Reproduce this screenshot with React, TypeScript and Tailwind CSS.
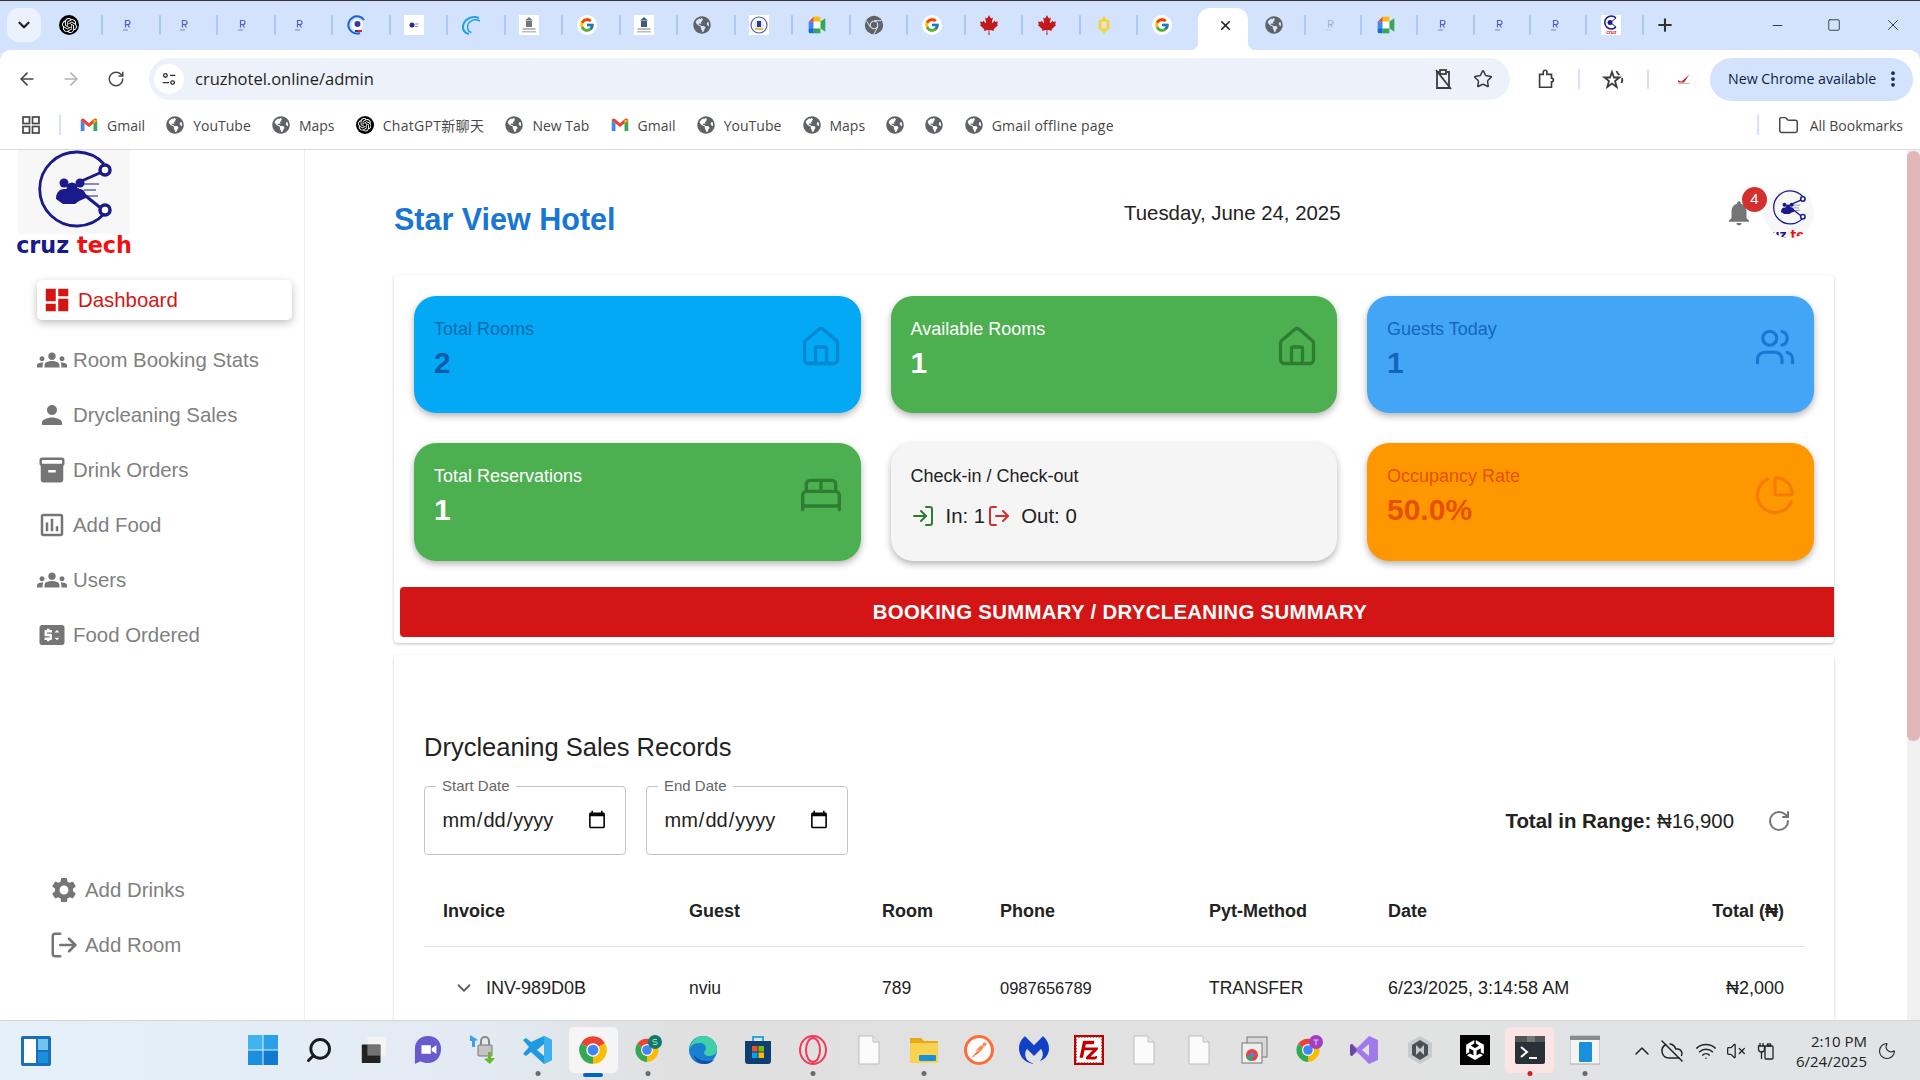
import React from "react";
import { ArrowLeft, ArrowRight, RotateCw, Star, X, Minus, Plus, Square, ChevronDown, House, Users, BedDouble, PieChart, LogIn, LogOut, Folder, EllipsisVertical, Search, Moon, ChevronUp, Wifi, VolumeX, CloudOff } from "lucide-react";
import { FaGlobeAmericas, FaCanadianMapleLeaf } from "react-icons/fa";
import { FcGoogle } from "react-icons/fc";
import { SiFilezilla, SiPostman, SiMalwarebytes, SiUnity, SiOpenai } from "react-icons/si";

const Mui = ({ d, className }: { d: string; className: string }) => (
  <svg viewBox="0 0 24 24" fill="currentColor" className={className}><path d={d} /></svg>
);

const P = {
  dash: "M3 13h8V3H3v10zm0 8h8v-6H3v6zm10 0h8V11h-8v10zm0-18v6h8V3h-8z",
  groups: "M12 12.75c1.63 0 3.07.39 4.24.9 1.08.48 1.76 1.56 1.76 2.73V18H6v-1.61c0-1.18.68-2.26 1.76-2.73 1.17-.52 2.61-.91 4.24-.91zM4 13c1.1 0 2-.9 2-2s-.9-2-2-2-2 .9-2 2 .9 2 2 2zm1.13 1.1c-.37-.06-.74-.1-1.13-.1-.99 0-1.93.21-2.78.58C.48 14.9 0 15.62 0 16.43V18h4.5v-1.61c0-.83.23-1.61.63-2.29zM20 13c1.1 0 2-.9 2-2s-.9-2-2-2-2 .9-2 2 .9 2 2 2zm4 3.43c0-.81-.48-1.53-1.22-1.85-.85-.37-1.79-.58-2.78-.58-.39 0-.76.04-1.13.1.4.68.63 1.46.63 2.29V18H24v-1.57zM12 6c1.66 0 3 1.34 3 3s-1.34 3-3 3-3-1.34-3-3 1.34-3 3-3z",
  person: "M12 12c2.21 0 4-1.79 4-4s-1.79-4-4-4-4 1.79-4 4 1.79 4 4 4zm0 2c-2.67 0-8 1.34-8 4v2h16v-2c0-2.66-5.33-4-8-4z",
  box: "M20 2H4c-1 0-2 .9-2 2v3.01c0 .72.43 1.34 1 1.69V20c0 1.1 1.1 2 2 2h14c.9 0 2-.9 2-2V8.7c.57-.35 1-.97 1-1.69V4c0-1.1-1-2-2-2zm-5 12H9v-2h6v2zm5-7H4V4h16v3z",
  chart: "M19 3H5c-1.1 0-2 .9-2 2v14c0 1.1.9 2 2 2h14c1.1 0 2-.9 2-2V5c0-1.1-.9-2-2-2zm0 16H5V5h14v14zM7 10h2v7H7zm4-3h2v10h-2zm4 6h2v4h-2z",
  price: "M20 4H4c-1.11 0-1.99.89-1.99 2L2 18c0 1.11.89 2 2 2h16c1.11 0 2-.89 2-2V6c0-1.11-.89-2-2-2zm-8 6H8v1h3c.55 0 1 .45 1 1v3c0 .55-.45 1-1 1h-1v1H8v-1H6v-2h4v-1H7c-.55 0-1-.45-1-1V9c0-.55.45-1 1-1h1V7h2v1h2v2zm4 6.25-2-2h4l-2 2zM14 10l2-2 2 2h-4z",
  gear: "M19.14 12.94c.04-.3.06-.61.06-.94 0-.32-.02-.64-.07-.94l2.03-1.58c.18-.14.23-.41.12-.61l-1.92-3.32c-.12-.22-.37-.29-.59-.22l-2.39.96c-.5-.38-1.03-.7-1.62-.94l-.36-2.54c-.04-.24-.24-.41-.48-.41h-3.84c-.24 0-.43.17-.47.41l-.36 2.54c-.59.24-1.13.57-1.62.94l-2.39-.96c-.22-.08-.47 0-.59.22L2.74 8.87c-.12.21-.08.47.12.61l2.03 1.58c-.05.3-.09.63-.09.94s.02.64.07.94l-2.03 1.58c-.18.14-.23.41-.12.61l1.92 3.32c.12.22.37.29.59.22l2.39-.96c.5.38 1.03.7 1.62.94l.36 2.54c.05.24.24.41.48.41h3.84c.24 0 .44-.17.47-.41l.36-2.54c.59-.24 1.13-.56 1.62-.94l2.39.96c.22.08.47 0 .59-.22l1.92-3.32c.12-.22.07-.47-.12-.61l-2.01-1.58zM12 15.6c-1.98 0-3.6-1.62-3.6-3.6s1.62-3.6 3.6-3.6 3.6 1.62 3.6 3.6-1.62 3.6-3.6 3.6z",
  bell: "M12 22c1.1 0 2-.9 2-2h-4c0 1.1.89 2 2 2zm6-6v-5c0-3.07-1.64-5.64-4.5-6.32V4c0-.83-.67-1.5-1.5-1.5s-1.5.67-1.5 1.5v.68C7.63 5.36 6 7.92 6 11v5l-2 2v1h16v-1l-2-2z",
};

const ChromeLogo = ({ className }: { className: string }) => (
  <svg viewBox="0 0 24 24" className={className}>
    <path d="M12 12 21.53 6.5A11 11 0 0 0 2.47 6.5Z" fill="#ea4335" />
    <path d="M12 12 2.47 6.5A11 11 0 0 0 12 23Z" fill="#34a853" />
    <path d="M12 12 12 23A11 11 0 0 0 21.53 6.5Z" fill="#fbbc04" />
    <circle cx="12" cy="12" r="5.4" fill="#fff" />
    <circle cx="12" cy="12" r="4.3" fill="#4285f4" />
  </svg>
);

const ChromeDark = () => (
  <svg viewBox="0 0 24 24" className="w-[20px] h-[20px]">
    <circle cx="12" cy="12" r="11" fill="#5f6368" />
    <circle cx="12" cy="12" r="5.2" fill="#d3e3fd" />
    <circle cx="12" cy="12" r="3.8" fill="#5f6368" />
    <path d="M12 6.8h9M7.5 14.5 3 7M16.5 14.5 12 22.8" stroke="#d3e3fd" strokeWidth="1.2" />
  </svg>
);

const Meet = ({ className }: { className: string }) => (
  <svg viewBox="0 0 24 24" className={className}>
    <path d="M2 8 8 2v6z" fill="#ea4335" />
    <path d="M8 2h8v6H8z" fill="#fbbc04" />
    <path d="M2 8h6v8H2z" fill="#4285f4" />
    <path d="M2 16h6v6H4a2 2 0 0 1-2-2z" fill="#1967d2" />
    <path d="M8 16h8v6H8z" fill="#34a853" />
    <path d="M16 8v8l6 4V4z" fill="#34a853" />
    <path d="M8 8h8v8H8z" fill="#fff" />
  </svg>
);

const Gmail = () => (
  <svg viewBox="0 0 24 24" className="w-[18px] h-[18px]">
    <path d="M1 6v14h5V10z" fill="#4285f4" />
    <path d="M18 10v10h5V6z" fill="#34a853" />
    <path d="M1 6c0-2.5 3-3.5 4.5-2L12 9.5 18.5 4C20 2.500 23 3.500 23 6l-5 4-6 4.500L6 10z" fill="#ea4335" />
    <path d="M18 4.800 23 6l-5 4z" fill="#fbbc04" />
  </svg>
);

const Globe = ({ className = "w-[18px] h-[18px]" }: { className?: string }) => <FaGlobeAmericas className={`${className} text-[#5f6368]`} />;
const Gpt = ({ size = "w-[20px] h-[20px]" }: { size?: string }) => (
  <span className={`${size} rounded-full bg-black flex items-center justify-center`}><SiOpenai className="w-[75%] h-[75%] text-white" /></span>
);
const Tiny = ({ pale }: { pale?: boolean }) => (
  <svg viewBox="0 0 20 20" className="w-[20px] h-[20px]">
    <path d="M8.500 12.500V5.500h2.500a2 2 0 0 1 0 4H8.500M10.500 9.500l2 3" fill="none" stroke={pale ? "#aab4d8" : "#5a5ec0"} strokeWidth="1.200" />
    <path d="M6 15h5" stroke={pale ? "#c8d0e8" : "#8c90d8"} strokeWidth="1.200" />
  </svg>
);
const Ring = () => (
  <svg viewBox="0 0 20 20" className="w-[20px] h-[20px]">
    <path d="M17 5A8.600 8.600 0 1 0 13 18" fill="none" stroke="#1a5fd0" strokeWidth="2" />
    <circle cx="10.500" cy="10" r="5.500" fill="#fff" />
    <circle cx="10.500" cy="9" r="3" fill="#3a3a9a" />
    <rect x="8" y="15" width="3" height="2" fill="#2a3f90" />
    <rect x="11" y="15" width="4" height="2" fill="#e02020" />
  </svg>
);
const WhiteTiny = () => (
  <span className="w-[20px] h-[20px] bg-white flex items-center justify-center">
    <svg viewBox="0 0 20 20" className="w-[20px] h-[20px]"><circle cx="8" cy="10" r="2.500" fill="#2a2a90" /><path d="M11 9h4M11 11.500h3" stroke="#8a8ac0" /></svg>
  </span>
);
const Swoosh = () => (
  <svg viewBox="0 0 20 20" className="w-[20px] h-[20px]" fill="none" stroke="#1ea0e0">
    <path d="M17 3C9 0 2 5 1 11c-.4 4 2 7 6 8" strokeWidth="2" />
    <path d="M18 6C12 3 6 6 5.500 12c0 3 1.500 5 4 5.500" strokeWidth="1.500" />
  </svg>
);
const Building = ({ color }: { color: string }) => (
  <span className="w-[20px] h-[20px] bg-white flex items-center justify-center">
    <svg viewBox="0 0 20 20" className="w-[20px] h-[20px]">
      <path d="M10 2 14 5.500H6z" fill={color} /><rect x="7" y="6" width="6" height="6" fill={color} />
      <path d="M4 13h12l1 2H3zM3 16h14v1.500H3z" fill="#b8bcc0" />
    </svg>
  </span>
);
const G = () => <span className="w-[20px] h-[20px] rounded-full bg-white flex items-center justify-center"><FcGoogle className="w-[16px] h-[16px]" /></span>;
const Seal = () => (
  <span className="w-[20px] h-[20px] bg-white flex items-center justify-center">
    <svg viewBox="0 0 20 20" className="w-[20px] h-[20px]"><circle cx="10" cy="10" r="8" fill="none" stroke="#5060b8" strokeWidth="1.200" /><circle cx="10" cy="10" r="5" fill="#e8ecf8" /><path d="M8 6h4v6H8z" fill="#2838a0" /><path d="M6 13h8v2H6z" fill="#e8c040" /></svg>
  </span>
);
const Maple = () => <FaCanadianMapleLeaf className="w-[20px] h-[20px] text-[#c01a1a]" />;
const Octagon = () => (
  <svg viewBox="0 0 20 20" className="w-[20px] h-[20px]"><path d="M10 1 12.500 4.500 15.500 6 15.500 14 12.500 15.500 10 19 7.500 15.500 4.500 14 4.500 6 7.500 4.500Z" fill="#f5d13a" /><path d="M7.500 6.500h5v7h-5z" fill="#e4e7d6" /></svg>
);
const CruzFav = () => (
  <span className="w-[20px] h-[20px] bg-white flex flex-col items-center overflow-hidden">
    <svg viewBox="0 0 20 15" className="w-[20px] h-[15px]"><path d="M15 3A6.500 6.500 0 1 0 15 12" fill="none" stroke="#1a1a8c" strokeWidth="1.500" /><circle cx="9" cy="7.500" r="2.500" fill="#1a1a8c" /><path d="M10 7 15 3M10 8l5 4" stroke="#1a1a8c" /></svg>
    <span className="text-[5px] leading-[5px] font-bold text-[#e01010] [font-family:'Liberation_Sans',sans-serif]">cruz</span>
  </span>
);

const tabsA: React.ReactNode[] = [<Gpt />, <Tiny />, <Tiny />, <Tiny />, <Tiny />, <Ring />, <WhiteTiny />, <Swoosh />, <Building color="#777" />, <G />, <Building color="#3f5a7a" />, <Globe className="w-[18px] h-[18px]" />, <Seal />, <Meet className="w-[20px] h-[20px]" />, <ChromeDark />, <G />, <Maple />, <Maple />, <Octagon />, <G />];
const tabsB: React.ReactNode[] = [<Globe />, <Tiny pale />, <Meet className="w-[20px] h-[20px]" />, <Tiny />, <Tiny />, <Tiny />, <CruzFav />];

const TabStrip = () => (
  <div className="h-[50px] bg-[#d3e3fd] border-t border-t-[#333] flex items-start pl-[7px] pt-[7px] relative shrink-0">
    <div className="w-[34px] h-[34px] rounded-[12px] bg-[#ebf2fe] flex items-center justify-center mr-[4.5px] shrink-0">
      <ChevronDown className="w-[18px] h-[18px] text-[#1f1f1f]" strokeWidth={3} />
    </div>
    {tabsA.map((t, i) => (
      <div key={i} className="w-[57.5px] h-[34px] flex items-center justify-between pl-[13.5px] shrink-0">
        <span className="w-[20px] h-[20px] flex items-center justify-center">{t}</span>
        {i < 19 ? <span className="w-[2px] h-[20px] rounded bg-[#a8c7fa]" /> : null}
      </div>
    ))}
    <div className="relative w-[50px] h-[42px] ml-[2px] mr-[2px] bg-white rounded-t-[12px] flex items-center justify-center pb-[8px] pl-[6px] shrink-0">
      <X className="w-[15px] h-[15px] text-[#1f1f1f]" strokeWidth={2.500} />
      <span className="absolute bottom-0 -left-[8px] w-[8px] h-[8px] bg-[radial-gradient(circle_at_0_0,#d3e3fd_8px,#fff_8.5px)]" />
      <span className="absolute bottom-0 -right-[8px] w-[8px] h-[8px] bg-[radial-gradient(circle_at_100%_0,#d3e3fd_8px,#fff_8.5px)]" />
    </div>
    {tabsB.map((t, i) => (
      <div key={i} className="w-[56.3px] h-[34px] flex items-center justify-between pl-[14px] shrink-0">
        <span className="w-[20px] h-[20px] flex items-center justify-center">{t}</span>
        <span className="w-[2px] h-[20px] rounded bg-[#a8c7fa]" />
      </div>
    ))}
    <Plus className="w-[20px] h-[20px] text-[#303030] mt-[7px] ml-[11px]" strokeWidth={2.500} />
    <div className="flex items-center ml-auto h-[34px] text-[#303030]">
      <Minus className="w-[15px] h-[15px] mr-[42px]" strokeWidth={1.500} />
      <Square className="w-[14px] h-[16px] mr-[43px]" strokeWidth={1.500} />
      <X className="w-[18px] h-[18px] mr-[18px]" strokeWidth={1.200} />
    </div>
  </div>
);

const Toolbar = () => (
  <div className="h-[57px] bg-[#d3e3fd] shrink-0">
    <div className="h-full bg-white rounded-t-[10px] flex items-center relative pt-[1px]">
      <ArrowLeft className="w-[20px] h-[20px] ml-[17px] text-[#474747]" />
      <ArrowRight className="w-[20px] h-[20px] ml-[24px] text-[#b3b3b3]" />
      <RotateCw className="w-[18px] h-[18px] ml-[26px] text-[#474747]" />
      <div className="w-[1361px] h-[42px] ml-[24px] rounded-full bg-[#edf2fa] flex items-center pl-[5px] shrink-0">
        <span className="w-[30px] h-[30px] rounded-full bg-white flex items-center justify-center">
          <svg viewBox="0 0 20 20" className="w-[18px] h-[18px]" fill="none" stroke="#303030" strokeWidth="1.500"><circle cx="6" cy="6" r="2" /><path d="M11 6h6M3 14h7" /><circle cx="14" cy="14" r="2" /></svg>
        </span>
        <span className="ml-[11px] text-[16.500px] text-[#1f1f1f] [font-family:'Open_Sans',sans-serif]">cruzhotel.online/admin</span>
        <svg viewBox="0 0 24 24" className="w-[24px] h-[24px] ml-auto" fill="none" stroke="#3c3c3c" strokeWidth="1.800"><path d="M8 5H6v16h12V5h-2" /><rect x="9" y="3" width="6" height="4" /><path d="M5 3 20 22" /></svg>
        <Star className="w-[20px] h-[20px] ml-[18px] mr-[17px] text-[#3c3c3c]" strokeWidth={1.800} />
      </div>
      <svg viewBox="0 0 24 24" className="w-[22px] h-[24px] ml-[25px]" fill="none" stroke="#3c3c3c" strokeWidth="1.800"><path d="M5 7h4V4.500a2 2 0 0 1 4 0V7h5v4a2 2 0 0 1 0 4v6H5z" /></svg>
      <span className="w-[2px] h-[20px] bg-[#d3e3fd] ml-[21px]" />
      <svg viewBox="0 0 24 24" className="w-[24px] h-[24px] ml-[21px]" fill="none" stroke="#3c3c3c" strokeWidth="1.800"><path d="M11 5l2 5.500h5.500l-4.500 3.500 1.700 6L11 16.500 6.300 20 8 14 3.500 10.500H9z" /><path d="M15.500 4c.5 1.500 1.500 3 3 4M21 11c.5 1.500.5 3-.5 5" /></svg>
      <span className="w-[2px] h-[20px] bg-[#d3e3fd] ml-[22px]" />
      <svg viewBox="0 0 20 20" className="w-[18px] h-[18px] ml-[26px]"><path d="M3 11l4 2 9-8-6 9H4z" fill="#c02030" /><path d="M4 15h12" stroke="#c8a0a8" /></svg>
      <div className="w-[203px] h-[43px] ml-[17px] rounded-full bg-[#d3e3fd] flex items-center pl-[18px] pb-[1px] text-[14.200px] text-[#0b1f3e] [font-family:'Open_Sans',sans-serif] whitespace-nowrap">
        New Chrome available
        <EllipsisVertical className="w-[20px] h-[20px] ml-auto mr-[10px] text-[#0b2a5c]" strokeWidth={2.500} />
      </div>
    </div>
  </div>
);

const BM = ({ icon, label, className }: { icon: React.ReactNode; label?: string; className?: string }) => (
  <div className="flex items-center gap-[9px]">
    {icon}
    {label && <span className={`whitespace-nowrap ${className ?? ""}`}>{label}</span>}
  </div>
);

const Bookmarks = () => (
  <div className="h-[43px] pb-[6px] bg-white border-b border-b-[#dcdcdc] flex items-center text-[14px] text-[#474747] [font-family:'Open_Sans','Noto_Sans_CJK_SC',sans-serif] shrink-0">
    <svg viewBox="0 0 18 18" className="w-[18px] h-[18px] ml-[22px]" fill="none" stroke="#474747" strokeWidth="1.700"><rect x="1" y="1" width="6.500" height="6.500" /><rect x="10.500" y="1" width="6.500" height="6.500" /><rect x="1" y="10.500" width="6.500" height="6.500" /><rect x="10.500" y="10.500" width="6.500" height="6.500" /></svg>
    <span className="w-[2px] h-[20px] bg-[#d3e3fd] ml-[19px] mr-[19px]" />
    <div className="flex items-center gap-[21.200px]">
      <BM icon={<Gmail />} label="Gmail" />
      <BM icon={<Globe />} label="YouTube" />
      <BM icon={<Globe />} label="Maps" />
      <BM icon={<Gpt size="w-[18px] h-[18px]" />} label="ChatGPT新聊天" className="tracking-[0.3px]" />
      <BM icon={<Globe />} label="New Tab" />
      <BM icon={<Gmail />} label="Gmail" />
      <BM icon={<Globe />} label="YouTube" />
      <BM icon={<Globe />} label="Maps" />
      <BM icon={<Globe />} />
      <BM icon={<Globe />} />
      <BM icon={<Globe />} label="Gmail offline page" className="tracking-[0.2px]" />
    </div>
    <span className="w-[2px] h-[20px] bg-[#d3e3fd] ml-auto" />
    <Folder className="w-[21px] h-[21px] ml-[19px] mr-[11px] text-[#474747]" strokeWidth={1.700} />
    <span className="mr-[17px] whitespace-nowrap">All Bookmarks</span>
  </div>
);

const Logo = ({ small }: { small?: boolean }) => (
  <div className={small ? "w-[50px] flex flex-col items-center" : "w-[112px] h-[105px] flex flex-col items-center"}>
    <svg viewBox="0 0 112 84" className={small ? "w-[50px] mt-[2px] shrink-0" : "w-[112px] h-[84px] bg-[#f7f7f8] shrink-0"}>
      <g transform="translate(2 0)">
        <path d="M84 14A37 37 0 1 0 84 64" fill="none" stroke="#1a1a8c" strokeWidth="2.800" />
        <path d="M57 33 82 22M57 39l25 20" stroke="#1a1a8c" strokeWidth="3" />
        <circle cx="85" cy="20" r="5" fill="#fff" stroke="#1a1a8c" strokeWidth="3.500" />
        <circle cx="85" cy="60" r="5" fill="#fff" stroke="#1a1a8c" strokeWidth="3.500" />
        <path d="M62 34h17M64 40h12M62 46h16" stroke="#1a1a8c" strokeWidth="1" />
        <circle cx="44" cy="33" r="4.500" fill="#1a1a8c" /><circle cx="60" cy="33" r="4.500" fill="#1a1a8c" /><circle cx="52" cy="38" r="5.500" fill="#1a1a8c" />
        <path d="M36 49c0-7 4-10 8-10h16c4 0 6 4 6 9l-7 3-4 3H43z" fill="#1a1a8c" />
      </g>
    </svg>
    <div className={small ? "text-[12px] leading-[13px] mt-[2px] font-bold whitespace-nowrap [font-family:'DejaVu_Sans',sans-serif]" : "text-[22.300px] leading-[21px] mt-[1px] font-bold whitespace-nowrap [font-family:'DejaVu_Sans',sans-serif]"}>
      <span className="text-[#1a1a8c]">cruz</span> <span className="text-[#f01010]">tech</span>
    </div>
  </div>
);

const Nav = ({ icon, label, extra }: { icon: React.ReactNode; label: string; extra?: boolean }) => (
  <div className={extra ? "h-[55px] flex items-center ml-[49px] gap-[6px]" : "h-[55px] flex items-center ml-[37px] gap-[6px]"}>
    <span className="w-[30px] h-[30px] flex items-center justify-center text-[#757575]">{icon}</span>
    <span className="text-[20.400px] text-[#808080]">{label}</span>
  </div>
);

const Sidebar = () => (
  <aside className="w-[305px] h-full border-r border-r-[#eeeeee] flex flex-col pb-[47.500px] shrink-0">
    <div className="ml-[18px]"><Logo /></div>
    <div className="ml-[37px] mt-[25px] w-[255px] h-[40px] rounded-[5px] bg-white shadow-[0_3px_8px_rgba(0,0,0,0.25)] flex items-center pl-[8px] gap-[6px] mb-[12.500px] shrink-0">
      <Mui d={P.dash} className="w-[30px] h-[30px] text-[#d41515] -ml-[3px]" />
      <span className="text-[20.400px] text-[#d41515]">Dashboard</span>
    </div>
    <Nav icon={<Mui d={P.groups} className="w-[30px] h-[30px]" />} label="Room Booking Stats" />
    <Nav icon={<Mui d={P.person} className="w-[30px] h-[30px]" />} label="Drycleaning Sales" />
    <Nav icon={<Mui d={P.box} className="w-[30px] h-[30px]" />} label="Drink Orders" />
    <Nav icon={<Mui d={P.chart} className="w-[30px] h-[30px]" />} label="Add Food" />
    <Nav icon={<Mui d={P.groups} className="w-[30px] h-[30px]" />} label="Users" />
    <Nav icon={<Mui d={P.price} className="w-[30px] h-[30px]" />} label="Food Ordered" />
    <div className="mt-auto">
      <Nav extra icon={<Mui d={P.gear} className="w-[30px] h-[30px]" />} label="Add Drinks" />
      <Nav extra icon={<LogOut className="w-[30px] h-[30px]" strokeWidth={2} />} label="Add Room" />
    </div>
  </aside>
);

const Card = ({ bg, label, value, labelColor, valueColor, icon }: { bg: string; label: string; value: string; labelColor: string; valueColor: string; icon: React.ReactNode }) => (
  <div className={`${bg} rounded-[22px] shadow-[0_3px_7px_rgba(0,0,0,0.3)] pl-[20px] pr-[18px] pt-[22px] flex justify-between`}>
    <div>
      <div className={`text-[18px] leading-[22px] ${labelColor}`}>{label}</div>
      <div className={`text-[30px] leading-[36px] font-bold mt-[5px] ${valueColor}`}>{value}</div>
    </div>
    {icon}
  </div>
);

const DateField = ({ label }: { label: string }) => (
  <div className="relative w-[202px] h-[69px] rounded-[4px] border border-[#c4c4c4]">
    <span className="absolute -top-[10px] left-[11px] bg-white px-[6px] text-[15px] leading-[18px] text-[#666]">{label}</span>
    <input type="date" className="w-full h-full pl-[16.500px] pr-[16px] pb-[1px] text-[20px] text-[#222] bg-transparent outline-none [font-family:'Liberation_Sans',sans-serif]" />
  </div>
);

const Main = () => (
  <main className="flex-1 min-w-0 pl-[89px] pr-[73px] overflow-hidden">
    <div className="h-[125px] flex items-center">
      <h1 className="w-[730px] mt-[14.500px] text-[30.500px] font-bold text-[#1976d2]">Star View Hotel</h1>
      <div className="mt-[2px] text-[20.400px] text-[#222]">Tuesday, June 24, 2025</div>
      <div className="ml-auto mr-[20px] flex items-center">
        <div className="relative w-[30px] h-[30px] text-[#757575] mr-[10px]">
          <Mui d={P.bell} className="w-[30px] h-[30px]" />
          <span className="absolute -top-[11px] left-[18px] w-[25px] h-[25px] rounded-full bg-[#d32f2f] text-white text-[15px] flex items-center justify-center">4</span>
        </div>
        <div className="w-[50px] h-[50px] rounded-full bg-[#f7f7f8] overflow-hidden"><Logo small /></div>
      </div>
    </div>

    <section className="bg-white rounded-[4px] shadow-[0_1px_3px_rgba(0,0,0,0.25)] pt-[21px] pb-[6px]">
      <div className="grid grid-cols-[446.500px_446.500px_446.500px] gap-x-[30px] gap-y-[30px] pl-[20px] grid-rows-[117px_118px]">
        <Card bg="bg-[#03a9f4]" label="Total Rooms" value="2" labelColor="text-[#0a6cb0]" valueColor="text-[#0b5cab]" icon={<House className="w-[44px] h-[44px] mt-[6.500px] text-[#0288d1]" strokeWidth={1.800} />} />
        <Card bg="bg-[#4caf50]" label="Available Rooms" value="1" labelColor="text-white" valueColor="text-white" icon={<House className="w-[44px] h-[44px] mt-[6.500px] text-[#2e7d32]" strokeWidth={1.800} />} />
        <Card bg="bg-[#42a5f5]" label="Guests Today" value="1" labelColor="text-[#1565c0]" valueColor="text-[#1565c0]" icon={<Users className="w-[42px] h-[42px] mt-[8px] text-[#1976d2]" strokeWidth={1.800} />} />
        <Card bg="bg-[#4caf50]" label="Total Reservations" value="1" labelColor="text-white" valueColor="text-white" icon={<BedDouble className="w-[44px] h-[44px] mt-[8px] text-[#2e7d32]" strokeWidth={1.800} />} />
        <div className="bg-[#f5f5f5] rounded-[22px] shadow-[0_3px_7px_rgba(0,0,0,0.3)] pl-[20px] pt-[22px]">
          <div className="text-[18px] leading-[22px] text-[#222]">Check-in / Check-out</div>
          <div className="flex items-center mt-[14px] text-[20.400px] text-[#222]">
            <LogIn className="w-[24px] h-[24px] text-[#2e7d32] mr-[11px]" />
            <span>In: 1</span>
            <LogOut className="w-[24px] h-[24px] text-[#d32f2f] ml-[2px] mr-[10px]" />
            <span>Out: 0</span>
          </div>
        </div>
        <Card bg="bg-[#ff9800]" label="Occupancy Rate" value="50.0%" labelColor="text-[#e65100]" valueColor="text-[#e65100]" icon={<PieChart className="w-[42px] h-[42px] mt-[8.500px] text-[#f57c00]" strokeWidth={1.800} />} />
      </div>
      <div className="ml-[6px] mt-[26px] h-[50px] pl-[6px] rounded-l-[4px] bg-[#d41515] text-white text-[20.400px] font-bold flex items-center justify-center tracking-[0.3px]">
        BOOKING SUMMARY / DRYCLEANING SUMMARY
      </div>
    </section>

    <section className="mt-[12px] bg-white rounded-[4px] shadow-[0_1px_3px_rgba(0,0,0,0.2)] pt-[77px] px-[30px] h-[420px]">
      <h2 className="text-[25.500px] leading-[30px] text-[#222]">Drycleaning Sales Records</h2>
      <div className="flex items-center mt-[24px] gap-[20px]">
        <DateField label="Start Date" />
        <DateField label="End Date" />
        <div className="ml-auto mt-[1px] text-[20.400px] text-[#222]"><b>Total in Range:</b> ₦16,900</div>
        <RotateCw className="w-[24px] h-[24px] ml-[13px] mr-[13px] text-[#757575]" />
      </div>
      <div className="grid grid-cols-[246px_193px_118px_209px_179px_1fr] pl-[19px] pr-[20px] h-[92px] items-center pt-[22px] text-[18px] font-bold text-[#222] border-b border-b-[#e0e0e0]">
        <div>Invoice</div><div>Guest</div><div>Room</div><div>Phone</div><div>Pyt-Method</div>
        <div className="flex justify-between"><span>Date</span><span>Total (₦)</span></div>
      </div>
      <div className="grid grid-cols-[246px_193px_118px_209px_179px_1fr] pl-[19px] pr-[20px] h-[82px] items-center text-[17.500px] text-[#222]">
        <div className="flex items-center text-[18px]"><ChevronDown className="w-[22px] h-[22px] text-[#616161] mr-[11px] ml-[10px]" />INV-989D0B</div>
        <div>nviu</div><div>789</div><div className="text-[16.500px]">0987656789</div><div>TRANSFER</div>
        <div className="flex justify-between text-[18px]"><span>6/23/2025, 3:14:58 AM</span><span>₦2,000</span></div>
      </div>
    </section>
  </main>
);

const Scrollbar = () => (
  <div className="w-[13px] h-full bg-[#f0f0f0] shrink-0">
    <div className="h-[590px] mt-[1px] rounded-[6px] bg-[#e0b6b6]" />
  </div>
);

const Dot = ({ c = "bg-[#6b6b6b]" }: { c?: string }) => <span className={`absolute bottom-[4px] left-1/2 -translate-x-1/2 w-[5px] h-[5px] rounded-full ${c}`} />;
const Cell = ({ children, dot, active, bar }: { children: React.ReactNode; dot?: string | boolean; active?: string; bar?: boolean }) => (
  <div className="w-[55.100px] h-full relative flex items-center justify-center shrink-0 pb-[1px]">
    {active && <span className={`absolute top-[6px] bottom-[7px] left-[3px] right-[3px] rounded-[5px] ${active}`} />}
    <span className="relative w-[30px] h-[30px] flex items-center justify-center">{children}</span>
    {dot && <Dot c={typeof dot === "string" ? dot : undefined} />}
    {bar && <span className="absolute bottom-[3px] left-1/2 -translate-x-1/2 w-[20px] h-[4px] rounded-full bg-[#0067c0]" />}
  </div>
);

const Doc = () => (
  <svg viewBox="0 0 24 30" className="w-[24px] h-[30px]"><path d="M2 1h14l6 6v22H2z" fill="#fbfbfb" stroke="#bdbdbd" /><path d="M16 1v6h6" fill="#e8e8e8" stroke="#bdbdbd" /></svg>
);

const BadgeChrome = ({ fill, mark }: { fill: string; mark: React.ReactNode }) => (
  <svg viewBox="0 0 30 30" className="w-[32px] h-[32px]">
    <path d="M14 15 24 9A12 12 0 0 0 4 9Z" fill="#ea4335" /><path d="M14 15 4 9A12 12 0 0 0 14 27Z" fill="#34a853" /><path d="M14 15 14 27A12 12 0 0 0 24 9Z" fill="#fbbc04" /><circle cx="14" cy="15" r="6" fill="#fff" /><circle cx="14" cy="15" r="4.800" fill="#4285f4" />
    <circle cx="22" cy="7" r="7" fill={fill} />{mark}
  </svg>
);

const Taskbar = () => (
  <div className="h-[60px] shrink-0 border-t border-t-[#d6d6d6] bg-[linear-gradient(90deg,#e6f0f8_0%,#e2ebf3_25%,#e0e0e0_35%,#e2e2e2_70%,#e0e4e6_100%)] flex items-center relative">
    <svg viewBox="0 0 30 30" className="w-[30px] h-[30px] ml-[21px]"><rect x="0" y="0" width="30" height="30" rx="2" fill="#1b6fb8" /><rect x="3" y="3" width="12" height="24" fill="#fff" /><rect x="17" y="3" width="10" height="11" fill="#6ec6f0" /><rect x="17" y="16" width="10" height="11" fill="#1a8fdc" /></svg>
    <div className="flex items-center h-full ml-[184px]">
      <Cell><svg viewBox="0 0 30 30" className="w-[30px] h-[30px]"><rect x="0" y="0" width="14.500" height="14.500" fill="#3fb4ef" /><rect x="15.500" y="0" width="14.500" height="14.500" fill="#2aa0e8" /><rect x="0" y="15.500" width="14.500" height="14.500" fill="#1b8fe0" /><rect x="15.500" y="15.500" width="14.500" height="14.500" fill="#0f7ad0" /></svg></Cell>
      <Cell><Search className="w-[30px] h-[30px] ml-[2px] text-[#1a1a1a] -scale-x-100" strokeWidth={2.500} /></Cell>
      <Cell><svg viewBox="0 0 30 30" className="w-[28px] h-[30px]"><rect x="9" y="1" width="20" height="20" fill="#f4f4f4" /><rect x="3" y="9" width="20" height="20" rx="1" fill="#222" /><rect x="9" y="9" width="14" height="12" fill="#aaa" opacity="0.6" /></svg></Cell>
      <Cell><svg viewBox="0 0 30 32" className="w-[28px] h-[30px]"><path d="M15 1C6 1 1 7 1 15v16l6-3c2 1 5 2 8 2 9 0 14-7 14-15S24 1 15 1z" fill="#6a5acd" /><path d="M8 11h10v9H8zM19 14l5-3v9l-5-3z" fill="#fff" /></svg></Cell>
      <Cell><svg viewBox="0 0 30 30" className="w-[30px] h-[30px]"><path d="M2 0l8 5-3 1v6H4V6H2z" fill="#3fa0e8" /><rect x="10" y="10" width="14" height="11" rx="1" fill="#c4c4c4" stroke="#777" /><path d="M13 10V6a4 4 0 0 1 8 0v4" fill="none" stroke="#888" strokeWidth="2" /><path d="M20 17h3v6h4l-5 6-6-5 4-1z" fill="#6ab82e" /></svg></Cell>
      <Cell dot><svg viewBox="0 0 30 30" className="w-[30px] h-[30px]"><path d="M21 1l8 4v20l-8 4-13-12-5 4-3-2 6-7-6-7 3-2 5 4z" fill="#1e9be0" /><path d="M21 9l-7 6 7 6z" fill="#e6e6e6" /><path d="M21 1l8 4v20l-8 4z" fill="#3db0f0" /></svg></Cell>
      <Cell active="bg-[#f5f5f5]" bar><ChromeLogo className="w-[32px] h-[32px]" /></Cell>
      <Cell dot><BadgeChrome fill="#0f7a6a" mark={<path d="M24 4.500h-3a1 1 0 0 0 0 2.500h2a1 1 0 0 1 0 2.500h-3" stroke="#9fe0c8" fill="none" />} /></Cell>
      <Cell><svg viewBox="0 0 30 30" className="w-[30px] h-[30px]"><circle cx="15" cy="15" r="14" fill="#1a7fd0" /><path d="M1 14C3 5 10 1 15 1c8 0 14 6 14 13 0 5-4 7-8 7-3 0-5-2-5-3 0-2 2-2 2-5s-3-5-6-5C6 8 3 11 1 14z" fill="#3fd0a8" /><path d="M6 20c0 5 5 9 11 9 4 0 7-2 9-4-6 2-14 2-20-5z" fill="#0f4fa8" /></svg></Cell>
      <Cell><svg viewBox="0 0 30 30" className="w-[30px] h-[30px]"><path d="M10 6V2h10v4" fill="none" stroke="#2aa8e0" strokeWidth="2" /><path d="M2 6h26v20a3 3 0 0 1-3 3H5a3 3 0 0 1-3-3z" fill="#0f3f70" /><rect x="9" y="11" width="5.500" height="5.500" fill="#f25022" /><rect x="15.500" y="11" width="5.500" height="5.500" fill="#7fba00" /><rect x="9" y="17.500" width="5.500" height="5.500" fill="#00a4ef" /><rect x="15.500" y="17.500" width="5.500" height="5.500" fill="#ffb900" /></svg></Cell>
      <Cell dot><svg viewBox="0 0 30 30" className="w-[30px] h-[30px]" fill="none" stroke="#f03a5a" strokeWidth="2"><ellipse cx="15" cy="15" rx="13" ry="14" /><ellipse cx="15" cy="15" rx="7" ry="12" /></svg></Cell>
      <Cell><Doc /></Cell>
      <Cell dot><svg viewBox="0 0 30 30" className="w-[30px] h-[30px]"><path d="M1 3h11l3 3h14v22H1z" fill="#e8a818" /><rect x="1" y="8" width="28" height="20" fill="#fbd24f" /><rect x="10" y="20" width="17" height="6" rx="1" fill="#1a8fdc" /></svg></Cell>
      <Cell><span className="w-[30px] h-[30px] rounded-full bg-[#ff6c37] flex items-center justify-center"><SiPostman className="w-[24px] h-[24px] text-white" /></span></Cell>
      <Cell><SiMalwarebytes className="w-[30px] h-[30px] text-[#1040c8]" /></Cell>
      <Cell><span className="w-[30px] h-[30px] bg-[#bf0000] flex items-center justify-center"><SiFilezilla className="w-[26px] h-[26px] text-white" /></span></Cell>
      <Cell><Doc /></Cell>
      <Cell><Doc /></Cell>
      <Cell><svg viewBox="0 0 30 30" className="w-[30px] h-[30px]"><rect x="8" y="2" width="20" height="20" fill="#d8d8d8" stroke="#777" /><rect x="3" y="8" width="20" height="20" fill="#eee" stroke="#777" /><circle cx="13" cy="20" r="6" fill="#ea4335" /><path d="M13 20 7 22a6 6 0 0 0 6 4z" fill="#34a853" /><circle cx="13" cy="20" r="2.500" fill="#4285f4" /></svg></Cell>
      <Cell><BadgeChrome fill="#a040c0" mark={<path d="M19.500 5h5M22 5v5" stroke="#f0d0f8" />} /></Cell>
      <Cell><svg viewBox="0 0 30 30" className="w-[30px] h-[30px]"><path d="M20 1 29 5v20l-9 4L8 17l-5 4-2-1V10l2-1 5 4z" fill="#a07ae8" /><path d="M20 9v12l-7-6z" fill="#e2e2e2" /><path d="M1 10l2-1 5 6-5 6-2-1z" fill="#6a48a8" /></svg></Cell>
      <Cell><svg viewBox="0 0 30 30" className="w-[30px] h-[30px]"><path d="M15 1 27 8v14l-12 7-12-7V8z" fill="#c4ccd0" /><path d="M15 5 23 10v10l-8 5-8-5V10z" fill="#4a5258" /><path d="M11 10v10l4-4 4 4V10l-4 4z" fill="#c4ccd0" /></svg></Cell>
      <Cell><span className="w-[30px] h-[30px] bg-black flex items-center justify-center"><SiUnity className="w-[20px] h-[20px] text-white" /></span></Cell>
      <Cell active="bg-[#fbe4e4]" dot="bg-[#d42020]"><svg viewBox="0 0 30 30" className="w-[30px] h-[30px]"><rect x="0" y="1" width="30" height="28" rx="2" fill="#2a3038" /><rect x="0" y="1" width="30" height="6" fill="#555" /><rect x="12" y="1" width="8" height="6" fill="#777" /><path d="M6 12l6 5-6 5" fill="none" stroke="#fff" strokeWidth="2" /><path d="M14 23h8" stroke="#fff" strokeWidth="2" /></svg></Cell>
      <Cell dot><svg viewBox="0 0 30 30" className="w-[30px] h-[30px]"><rect x="0" y="1" width="30" height="28" fill="#f4f4f4" stroke="#aaa" /><rect x="0" y="1" width="30" height="4" fill="#8a8a8a" /><rect x="9" y="7" width="13" height="20" rx="1" fill="#1a8fdc" /></svg></Cell>
    </div>
    <div className="flex items-center text-[#222] ml-[18px]">
      <ChevronUp className="w-[24px] h-[24px]" strokeWidth={1.500} />
      <CloudOff className="w-[24px] h-[24px] ml-[6px]" strokeWidth={1.500} />
      <Wifi className="w-[22px] h-[22px] ml-[11px]" strokeWidth={1.700} />
      <VolumeX className="w-[20px] h-[20px] ml-[9px]" strokeWidth={1.500} />
      <svg viewBox="0 0 22 22" className="w-[22px] h-[22px] ml-[9px]" fill="none" stroke="#222" strokeWidth="1.300"><path d="M5 3v3M8 3v3M3.500 6h6v3a3 3 0 0 1-6 0zM6.500 12v7" /><rect x="10" y="6" width="8" height="13" rx="1" /><rect x="12.500" y="4" width="3" height="2" /></svg>
    </div>
    <div className="ml-auto mr-[23px] flex items-center text-[15px] leading-[20px] text-[#222] [font-family:'Open_Sans',sans-serif]">
      <div className="text-right">2:10 PM<br />6/24/2025</div>
      <Moon className="w-[20px] h-[20px] ml-[10px]" strokeWidth={1.300} />
    </div>
  </div>
);

export default function App() {
  return (
    <div className="w-[1920px] h-[1080px] overflow-hidden flex flex-col bg-white [font-family:'Liberation_Sans',sans-serif]">
      <TabStrip />
      <Toolbar />
      <Bookmarks />
      <div className="h-[870px] flex overflow-hidden shrink-0">
        <Sidebar />
        <Main />
        <Scrollbar />
      </div>
      <Taskbar />
    </div>
  );
}
